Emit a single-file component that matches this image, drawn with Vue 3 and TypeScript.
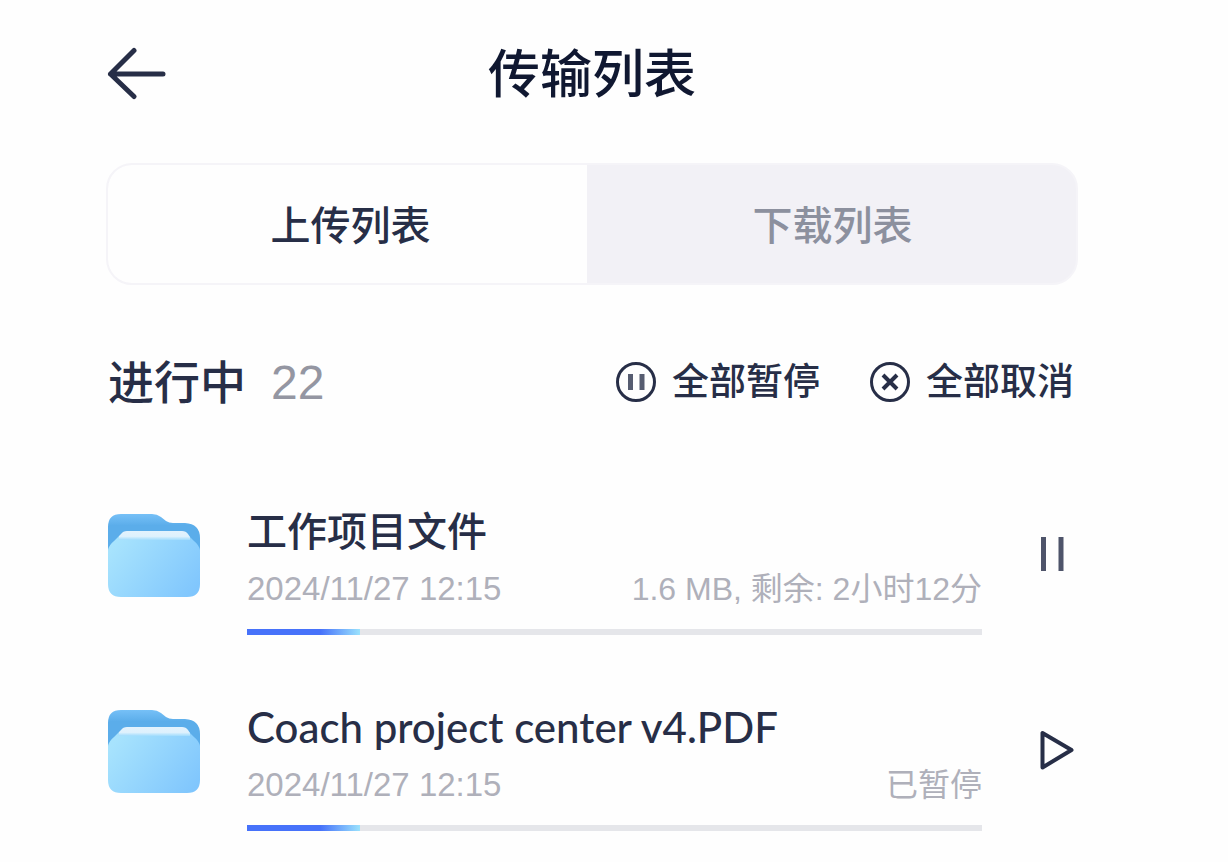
<script setup lang="ts">
import { ref } from 'vue'

interface Transfer {
  id: number
  name: string
  time: string
  status: string
  percent: number
  paused: boolean
}

const activeTab = ref<'upload' | 'download'>('upload')
const total = 22
const transfers = ref<Transfer[]>([
  { id: 1, name: '工作项目文件', time: '2024/11/27 12:15', status: '1.6 MB, 剩余: 2小时12分', percent: 15.4, paused: false },
  { id: 2, name: 'Coach project center v4.PDF', time: '2024/11/27 12:15', status: '已暂停', percent: 15.4, paused: true },
])

const isLatin = (name: string) => /^[\x20-\x7e]+$/.test(name)
</script>

<template>
  <main class="page">
    <header class="header">
      <button class="icon-button back" type="button" aria-label="返回">
        <svg width="60" height="56" viewBox="0 0 60 56" fill="none" stroke="currentColor" stroke-width="5" stroke-linecap="round" stroke-linejoin="round">
          <path d="M28 3.500 4.500 27 28 49.500M4.500 27H57" />
        </svg>
      </button>
      <h1 class="title">传输列表</h1>
    </header>

    <div class="tabs" role="tablist">
      <button class="tab" :class="{ active: activeTab === 'upload' }" type="button" role="tab" :aria-selected="activeTab === 'upload'" @click="activeTab = 'upload'">上传列表</button>
      <button class="tab" :class="{ active: activeTab === 'download' }" type="button" role="tab" :aria-selected="activeTab === 'download'" @click="activeTab = 'download'">下载列表</button>
    </div>

    <section>
      <div class="toolbar">
        <h2 class="heading">进行中 <span class="count">{{ total }}</span></h2>
        <div class="actions">
          <button class="action" type="button">
            <svg width="42" height="42" viewBox="0 0 42 42" fill="none" stroke="currentColor">
              <circle cx="20" cy="20" r="18.500" stroke-width="3" />
              <path d="M14.500 12v16M26 12v16" stroke="#565c70" stroke-width="5" />
            </svg>
            全部暂停
          </button>
          <button class="action" type="button">
            <svg width="42" height="42" viewBox="0 0 42 42" fill="none" stroke="currentColor">
              <circle cx="20" cy="20" r="18.500" stroke-width="3" />
              <path d="m13 13 14 14M27 13 13 27" stroke-width="4" />
            </svg>
            全部取消
          </button>
        </div>
      </div>

      <ul class="list">
        <li v-for="item in transfers" :key="item.id" class="item">
          <svg class="folder" width="96" height="88" viewBox="0 0 96 88" aria-hidden="true">
            <defs>
              <linearGradient :id="`back-${item.id}`" x1="0" y1="0" x2="0" y2="1">
                <stop offset="0" stop-color="#76c0f7" />
                <stop offset="0.200" stop-color="#5badea" />
                <stop offset="1" stop-color="#5badea" />
              </linearGradient>
              <linearGradient :id="`paper-${item.id}`" x1="0" y1="0" x2="0" y2="1">
                <stop offset="0" stop-color="#e3f2fd" />
                <stop offset="0.600" stop-color="#def1fd" />
                <stop offset="1" stop-color="#a0dcfd" />
              </linearGradient>
              <linearGradient :id="`front-${item.id}`" x1="0" y1="0.300" x2="1" y2="0.800">
                <stop offset="0" stop-color="#a7e3fd" />
                <stop offset="1" stop-color="#80c6fd" />
              </linearGradient>
            </defs>
            <path :fill="`url(#back-${item.id})`" d="M2 15Q2 2 15 2H46Q51 2 55 5L60 9Q63 11 67 11H79Q94 12 94 26V60H2Z" />
            <path :fill="`url(#front-${item.id})`" d="M2 38Q3 33 8 29L13 24H83L88 29Q93 33 94 38V72Q94 85 81 85H15Q2 85 2 72Z" />
            <path :fill="`url(#paper-${item.id})`" d="M13 24 15 22Q17 19 21 19H76Q80 19 82 22L84 25V28H13Z" />
          </svg>
          <div class="body">
            <h3 class="name" :class="{ latin: isLatin(item.name) }">{{ item.name }}</h3>
            <div class="meta">
              <time class="time">{{ item.time }}</time>
              <span>{{ item.status }}</span>
            </div>
            <div class="track" role="progressbar" :aria-label="item.name" :aria-valuenow="item.percent" aria-valuemin="0" aria-valuemax="100">
              <div class="fill" :style="{ width: `${item.percent}%` }"></div>
            </div>
          </div>
          <button class="icon-button toggle" type="button" :aria-label="item.paused ? '继续' : '暂停'" @click="item.paused = !item.paused">
            <svg width="40" height="44" viewBox="0 0 40 44" fill="none" stroke="currentColor">
              <path v-if="item.paused" d="M4.500 5V39.500L33.500 22Z" stroke-width="4" stroke-linejoin="round" />
              <path v-else d="M5.500 5v34M23 5v34" stroke="#4e546a" stroke-width="5" />
            </svg>
          </button>
        </li>
      </ul>
    </section>
  </main>
</template>

<style>
body {
  background: #fefefe;
}
</style>

<style scoped>
.page {
  box-sizing: border-box;
  padding: 36px 150px 0 106px;
  color: #272e47;
  font-family: "Liberation Sans", "Noto Sans CJK SC", sans-serif;
}
button {
  padding: 0;
  border: 0;
  background: none;
  color: inherit;
  font-family: inherit;
  cursor: pointer;
}
svg {
  display: block;
  flex: none;
}
h1, h2, h3 {
  margin: 0;
  font-weight: 500;
}
.header {
  display: grid;
  grid-template-columns: 60px 1fr 60px;
  align-items: center;
  height: 76px;
}
.title {
  text-align: center;
  color: #101831;
  font-size: 52px;
  line-height: 78px;
}
.tabs {
  box-sizing: border-box;
  display: flex;
  height: 122px;
  margin-top: 51px;
  border: 2px solid #f5f4f8;
  border-radius: 26px;
  overflow: hidden;
  background: #f2f1f6;
}
.tab {
  flex: 1;
  padding: 0 0 2px 2px;
  color: #8c909e;
  font-size: 40px;
  font-weight: 500;
}
.tab.active {
  box-sizing: border-box;
  flex: 0 0 auto;
  width: 49.5%;
  padding-left: 6px;
  background: #fefefe;
  color: #272e47;
}
.toolbar {
  display: flex;
  align-items: center;
  justify-content: space-between;
  height: 64px;
  margin-top: 66px;
  padding: 0 4px 0 2px;
}
.heading {
  display: flex;
  align-items: center;
  gap: 25px;
  font-size: 46px;
  line-height: 64px;
}
.count {
  color: #9496a2;
  font-size: 48px;
}
.actions {
  display: flex;
  gap: 50px;
}
.action {
  display: flex;
  align-items: center;
  gap: 14px;
  font-size: 37px;
  line-height: 64px;
  font-weight: 500;
}
.list {
  display: grid;
  gap: 68px;
  margin: 0;
  padding: 92px 0 0;
  list-style: none;
}
.item {
  display: flex;
  align-items: flex-start;
}
.folder {
  margin-top: 5px;
}
.body {
  flex: 1;
  min-width: 0;
  margin: 0 56px 0 45px;
}
.name {
  font-family: Lato, "Noto Sans CJK SC", sans-serif;
  font-size: 40px;
  line-height: 48px;
}
.name.latin {
  font-size: 42px;
}
.meta {
  display: flex;
  justify-content: space-between;
  margin-top: 14px;
  color: #afb0ba;
  font-size: 32px;
  line-height: 40px;
}
.time {
  font-size: 33px;
}
.track {
  height: 6px;
  margin-top: 20px;
  background: #e5e6ea;
}
.fill {
  height: 6px;
  background: linear-gradient(90deg, #4772fa 0 65%, #9ae2fd);
}
.toggle {
  margin-top: 25px;
}
</style>
